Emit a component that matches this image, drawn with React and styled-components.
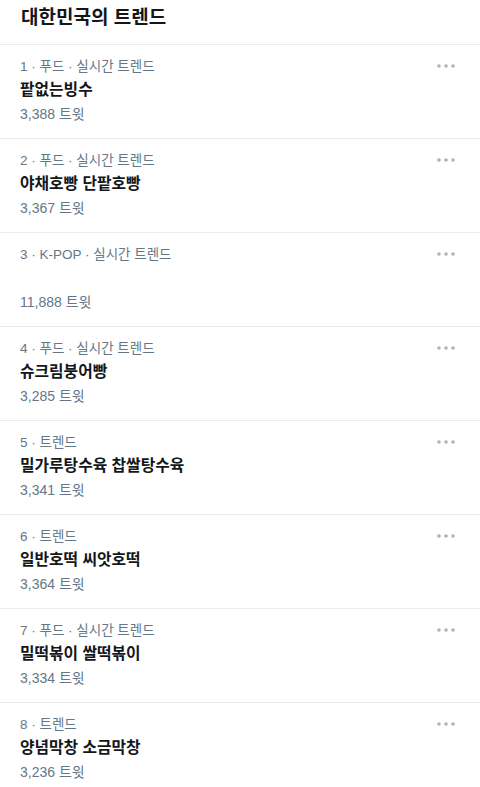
import React from "react";
import styled, { createGlobalStyle } from "styled-components";

const Global = createGlobalStyle`
  html, body { margin: 0; padding: 0; background: #fff; }
  body {
    font-family: "Liberation Sans", "Noto Sans CJK KR", sans-serif;
    -webkit-font-smoothing: antialiased;
  }
`;

const Page = styled.div`
  width: 480px;
  background: #fff;
`;

const Header = styled.h1`
  margin: 0;
  padding: 6px 20px 14px 21px;
  font-size: 19px;
  line-height: 24px;
  font-weight: 700;
  color: #14171a;
  border-bottom: 1px solid #e6ecf0;
`;

const Row = styled.div`
  display: flex;
  align-items: flex-start;
  padding: 12px 20px 14px 20px;
  border-bottom: 1px solid #e6ecf0;
`;

const Body = styled.div`
  flex: 1;
  display: flex;
  flex-direction: column;
`;

const Meta = styled.div`
  font-size: 13.5px;
  line-height: 20px;
  color: #657786;
`;

const Title = styled.div`
  margin-top: 1px;
  font-size: 15.8px;
  line-height: 24px;
  font-weight: 700;
  color: #14171a;
  min-height: 24px;
`;

const Count = styled.div`
  margin-top: 2px;
  font-size: 14px;
  line-height: 20px;
  color: #657786;
`;

const More = styled.div`
  width: 22px;
  height: 20px;
  margin-right: 3px;
  margin-top: -1px;
  display: flex;
  align-items: center;
  justify-content: center;
`;

const Dots = () => (
  <svg width="20" height="6" viewBox="0 0 20 6">
    <circle cx="3" cy="3" r="1.8" fill="#aab4bc" />
    <circle cx="10" cy="3" r="1.8" fill="#aab4bc" />
    <circle cx="17" cy="3" r="1.8" fill="#aab4bc" />
  </svg>
);

const trends = [
  { meta: "1 · 푸드 · 실시간 트렌드", title: "팥없는빙수", count: "3,388 트윗" },
  { meta: "2 · 푸드 · 실시간 트렌드", title: "야채호빵 단팥호빵", count: "3,367 트윗" },
  { meta: "3 · K-POP · 실시간 트렌드", title: "", count: "11,888 트윗" },
  { meta: "4 · 푸드 · 실시간 트렌드", title: "슈크림붕어빵", count: "3,285 트윗" },
  { meta: "5 · 트렌드", title: "밀가루탕수육 찹쌀탕수육", count: "3,341 트윗" },
  { meta: "6 · 트렌드", title: "일반호떡 씨앗호떡", count: "3,364 트윗" },
  { meta: "7 · 푸드 · 실시간 트렌드", title: "밀떡볶이 쌀떡볶이", count: "3,334 트윗" },
  { meta: "8 · 트렌드", title: "양념막창 소금막창", count: "3,236 트윗" },
];

export default function App() {
  return (
    <Page>
      <Global />
      <Header>대한민국의 트렌드</Header>
      {trends.map((t) => (
        <Row key={t.meta}>
          <Body>
            <Meta>{t.meta}</Meta>
            <Title>{t.title}</Title>
            <Count>{t.count}</Count>
          </Body>
          <More>
            <Dots />
          </More>
        </Row>
      ))}
    </Page>
  );
}
